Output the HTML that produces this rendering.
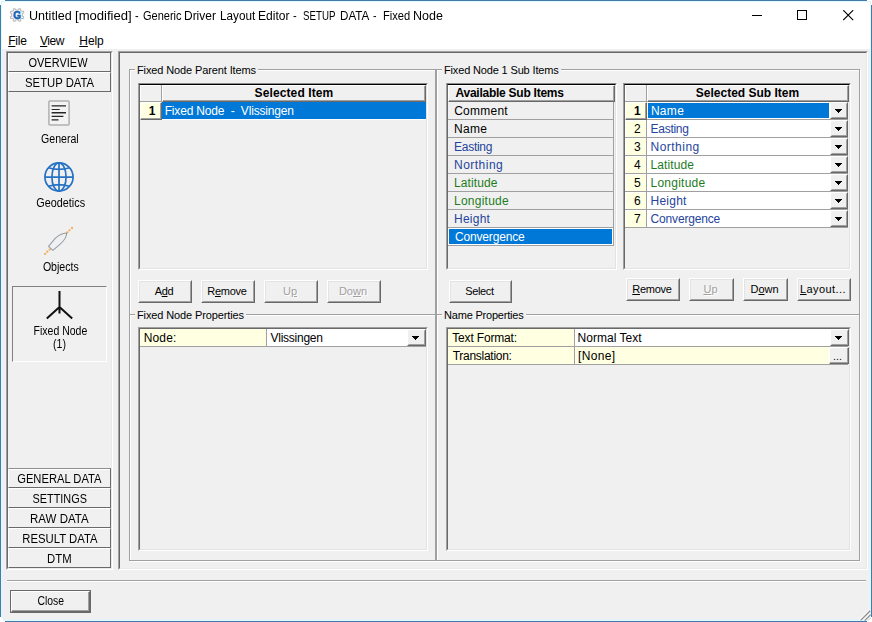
<!DOCTYPE html>
<html>
<head>
<meta charset="utf-8">
<title>Generic Driver Layout Editor</title>
<style>
html,body{margin:0;padding:0;}
body{width:872px;height:622px;position:relative;overflow:hidden;background:#fff;
 font-family:"Liberation Sans",sans-serif;font-size:12px;color:#000;}
.a{position:absolute;box-sizing:border-box;}
.t{position:absolute;white-space:nowrap;line-height:16px;height:16px;}
u{text-decoration:underline;text-underline-offset:1px;}
/* window chrome */
#titlebar{left:2px;top:2px;width:868px;height:47px;background:#fff;}
.bl{background:#447aa8;}
/* sunken panels */
.p2{border:1px solid;border-color:#a0a0a0 #fff #fff #a0a0a0;}
.p2:before{content:"";position:absolute;left:0;top:0;right:0;bottom:0;border:1px solid;border-color:#696969 #e9e9e9 #e9e9e9 #696969;}
.sunk1{border:1px solid;border-color:#696969 #fff #fff #696969;}
.lbtn{left:8px;width:103px;height:20px;border:1px solid;border-color:#fff #696969 #696969 #fff;
 text-align:center;font-size:12.3px;line-height:20px;}
.ms{display:inline-block;font-size:12.3px;transform-origin:50% 50%;white-space:nowrap;}
.btn{height:23px;border:1px solid;border-color:#fff #696969 #696969 #fff;text-align:center;
 font-size:11px;line-height:21px;padding-right:2px;}
.btn:before{content:"";position:absolute;left:0;top:0;right:0;bottom:0;border:1px solid;border-color:#e3e3e3 #a0a0a0 #a0a0a0 #e3e3e3;}
.btn.dis{color:#a0a0a0;text-shadow:1px 1px 0 #fff;}
.gb{border:1px solid #a0a0a0;box-shadow:1px 1px 0 #fff, inset 1px 1px 0 #fff;}
.gl{background:#f0f0f0;font-size:11px;padding:0 2px;line-height:14px;height:14px;}
.grid{border:2px solid;border-color:#8c8c8c #fff #fff #a0a0a0;}
.grid:before{content:"";position:absolute;left:-1px;top:-1px;right:-1px;bottom:-1px;border:1px solid;border-color:#000 #e3e3e3 #e3e3e3 #696969;}
.grid.pg{border-top-color:#a0a0a0;}
.grid.pg:before{border-top-color:#696969;}
.hl{background:#a0a0a0;}
.sel{background:#0078d7;color:#fff;}
.yl{background:#ffffe1;}
.wh{background:#fff;}
.hc{border:1px solid;border-color:#fff #696969 #696969 #fff;box-shadow:inset -1px -1px 0 #a0a0a0;}
.rc{border:1px solid;border-color:#fff #696969 #696969 #fff;box-shadow:inset -1px -1px 0 #a0a0a0;}
.blue{color:#26449c;}
.green{color:#1e7c1e;}
.b{font-weight:bold;}
.sx{transform-origin:0 50%;}
.dd{width:19px;height:17px;background:#f0f0f0;border:1px solid;border-color:#fff #696969 #696969 #fff;}
.dd:before{content:"";position:absolute;left:0;top:0;right:0;bottom:0;border:1px solid;border-color:#f0f0f0 #a0a0a0 #a0a0a0 #f0f0f0;}
.dd:after{content:"";position:absolute;left:4px;top:6px;width:7px;height:4px;background:linear-gradient(#000,#000) 0 0/7px 1px no-repeat,linear-gradient(#000,#000) 1px 1px/5px 1px no-repeat,linear-gradient(#000,#000) 2px 2px/3px 1px no-repeat,linear-gradient(#000,#000) 3px 3px/1px 1px no-repeat;}
</style>
</head>
<body>
<!-- window frame -->
<div class="a" style="left:0;top:0;width:872px;height:622px;background:#fff;"></div>
<div class="a bl" style="left:5px;top:0;width:862px;height:1px;"></div>
<div class="a bl" style="left:5px;top:621px;width:862px;height:1px;"></div>
<div class="a bl" style="left:0;top:5px;width:1px;height:612px;"></div>
<div class="a bl" style="left:871px;top:5px;width:1px;height:612px;"></div>
<div class="a" style="left:1px;top:1px;width:870px;height:620px;background:#f0f0f0;border:1px solid #dcfbff;box-shadow:inset 0 0 0 1px #e9f2fa;"></div>
<!-- title + menu background -->
<div class="a" id="titlebar"></div>
<!-- title icon -->
<svg class="a" style="left:9px;top:7px;" width="17" height="16" viewBox="0 0 17 16">
 <path d="M4 1.2H6.2V2.5H9.8V1.2H12V3.8H15.2V6H13.9V9.6H15.2V11.8H12V14.7H9.8V13.4H6.2V14.7H4V11.8H0.9V9.6H2.2V6H0.9V3.8H4Z" fill="#eef6fe" stroke="#a8a8a8" stroke-width="0.85" stroke-linejoin="round" transform="translate(8.1 8) scale(.92) translate(-8.1 -8)"/>
 <text x="8.1" y="11.8" font-family="Liberation Sans, sans-serif" font-weight="bold" font-size="10" fill="#1261b2" stroke="#1261b2" stroke-width="0.5" text-anchor="middle">G</text>
</svg>
<div class="a" style="left:0;top:8px;width:460px;height:16px;font-size:12px;"><span class="t sx" style="left:29.4px;top:0;transform:scaleX(1.049);">Untitled</span> <span class="t sx" style="left:74.7px;top:0;transform:scaleX(1.09);">[modified]</span> <span class="t sx" style="left:135.2px;top:0;transform:scaleX(0.9);">-</span> <span class="t sx" style="left:142.8px;top:0;transform:scaleX(0.917);">Generic</span> <span class="t sx" style="left:184.4px;top:0;transform:scaleX(0.997);">Driver</span> <span class="t sx" style="left:219.7px;top:0;transform:scaleX(0.977);">Layout</span> <span class="t sx" style="left:257.8px;top:0;transform:scaleX(1.007);">Editor</span> <span class="t sx" style="left:292.5px;top:0;transform:scaleX(0.925);">-</span> <span class="t sx" style="left:302.7px;top:0;transform:scaleX(0.81);">SETUP</span> <span class="t sx" style="left:339.7px;top:0;transform:scaleX(0.969);">DATA</span> <span class="t sx" style="left:372.5px;top:0;transform:scaleX(0.875);">-</span> <span class="t sx" style="left:382.8px;top:0;transform:scaleX(0.929);">Fixed</span> <span class="t sx" style="left:412.7px;top:0;transform:scaleX(1.041);">Node</span> </div>
<!-- window controls -->
<div class="a" style="left:752px;top:15px;width:10px;height:1px;background:#000;"></div>
<div class="a" style="left:797px;top:10px;width:10px;height:10px;border:1px solid #000;"></div>
<svg class="a" style="left:843px;top:10px;" width="11" height="11" viewBox="0 0 11 11"><path d="M0.2 0.2L10.2 10.2M10.2 0.2L0.2 10.2" stroke="#000" stroke-width="1.15" fill="none"/></svg>

<!-- menu -->
<div class="t" style="left:8.2px;top:33px;font-size:12px;letter-spacing:-0.2px;"><u>F</u>ile</div>
<div class="t" style="left:40px;top:33px;font-size:12px;letter-spacing:-0.5px;"><u>V</u>iew</div>
<div class="t" style="left:79.3px;top:33px;font-size:12px;letter-spacing:-0.1px;"><u>H</u>elp</div>

<!-- left panel -->
<div class="a lbtn" style="top:52px;"><span class="ms" style="transform:scaleX(.895);margin-left:-2px">OVERVIEW</span></div>
<div class="a lbtn" style="top:72px;"><span class="ms" style="transform:scaleX(.918)">SETUP DATA</span></div>
<div class="a lbtn" style="top:468px;border-top-color:#8e8e8e;box-shadow:inset 0 1px 0 #fff;"><span class="ms" style="transform:scaleX(.91)">GENERAL DATA</span></div>
<div class="a lbtn" style="top:488px;"><span class="ms" style="transform:scaleX(.885)">SETTINGS</span></div>
<div class="a lbtn" style="top:508px;"><span class="ms" style="transform:scaleX(.935)">RAW DATA</span></div>
<div class="a lbtn" style="top:528px;"><span class="ms" style="transform:scaleX(.92)">RESULT DATA</span></div>
<div class="a lbtn" style="top:548px;"><span class="ms" style="transform:scaleX(.92)">DTM</span></div>
<div class="a p2" style="left:6px;top:51px;width:107px;height:519px;"></div>

<!-- left panel icons -->
<svg class="a" style="left:48px;top:100px;" width="22" height="26" viewBox="0 0 22 26">
 <rect x="0.9" y="0.9" width="20.2" height="24.2" rx="1" fill="#f3f3f3" stroke="#b0b0b0" stroke-width="1.5"/>
 <g stroke="#262626" stroke-width="1.4" fill="none">
  <path d="M3.6 5.9H18M3.6 12.8H18"/>
  <path d="M3.6 9.5H11.7M3.6 16.3H15.4M3.6 19.8H10.5" stroke-width="1.15"/>
 </g>
</svg>
<div class="t" style="left:10px;top:131px;width:100px;text-align:center;"><span class="ms" style="transform:scaleX(.86)">General</span></div>

<svg class="a" style="left:43px;top:161px;" width="32" height="32" viewBox="0 0 32 32">
 <g fill="none" stroke="#2672c4" stroke-width="1.7">
  <circle cx="16" cy="16" r="14.1"/>
  <ellipse cx="16" cy="16" rx="7.1" ry="14.1"/>
  <path d="M16 2V30M2 16.2H30M5.4 6.7Q16 9.9 26.6 6.7M5.4 25.3Q16 22.1 26.6 25.3"/>
 </g>
</svg>
<div class="t" style="left:10px;top:195px;width:101px;text-align:center;"><span class="ms" style="transform:scaleX(.88)">Geodetics</span></div>

<svg class="a" style="left:42px;top:224px;" width="34" height="34" viewBox="0 0 34 34">
 <g fill="#f3ae5e">
  <circle cx="3.1" cy="29.9" r="1.15"/><circle cx="5.3" cy="27.7" r="1.15"/><circle cx="7.6" cy="25.6" r="1.15"/>
  <circle cx="25.3" cy="8.5" r="1.15"/><circle cx="27.5" cy="6.3" r="1.15"/><circle cx="30" cy="4" r="1.15"/>
 </g>
 <path d="M24.6 8.9Q18.6 9.2 13.2 14.4L6.5 22.3L10.9 26.3L18.7 19.6Q25 13.8 24.6 8.9Z" fill="none" stroke="#939ca6" stroke-width="1.05" stroke-linejoin="round"/>
</svg>
<div class="t" style="left:10px;top:259px;width:101px;text-align:center;"><span class="ms" style="transform:scaleX(.862)">Objects</span></div>

<div class="a" style="left:12px;top:286px;width:95px;height:76px;border:1px solid;border-color:#808080 #fff #fff #808080;"></div>
<svg class="a" style="left:44px;top:289px;" width="32" height="32" viewBox="0 0 32 32">
 <path d="M15.5 2V24.5M15.5 18L2.8 29.5M15.5 18L28.2 29.5" stroke="#111" stroke-width="2" fill="none"/>
</svg>
<div class="t" style="left:10px;top:323px;width:101px;text-align:center;"><span class="ms" style="transform:scaleX(.854)">Fixed Node</span></div>
<div class="t" style="left:10px;top:336px;width:100px;text-align:center;"><span class="ms" style="transform:scaleX(.86)">(1)</span></div>

<!-- right panel -->
<div class="a p2" style="left:118px;top:51px;width:750px;height:519px;"></div>

<!-- bottom separator + close -->
<div class="a" style="left:7px;top:580px;width:859px;height:2px;background:#fff;border-top:1px solid #a0a0a0;"></div>
<div class="a" style="left:10px;top:590px;width:81px;height:23px;border:1px solid #696969;"></div>
<div class="a" style="left:11px;top:591px;width:79px;height:21px;border:1px solid;border-color:#fff #696969 #696969 #fff;text-align:center;line-height:18px;box-shadow:inset -1px -1px 0 #a0a0a0;"><span class="ms" style="transform:scaleX(.845)">Close</span></div>
<!-- resize grip -->
<svg class="a" style="left:858px;top:608px;" width="14" height="14" viewBox="0 0 14 14">
 <path d="M9 14L14 9V14Z" fill="#fff"/>
 <path d="M1.6 12.2L12 1.8M5.6 12.5L12.5 5.6" stroke="#fff" stroke-width="1.3" fill="none"/>
 <path d="M2.6 12.4L12.2 2.8M6.6 12.6L12.6 6.6" stroke="#8a8a8a" stroke-width="1.3" fill="none"/>
 <path d="M10.4 12.3L12.6 10.1" stroke="#909090" stroke-width="0.9" stroke-dasharray="0.9 0.9" fill="none"/>
</svg>
<div class="a" style="left:0;top:618px;width:3px;height:4px;background:#fff;"></div>

<!-- GROUP BOXES -->
<div class="a gb" style="left:129px;top:69px;width:307px;height:246px;"></div>
<div class="a gb" style="left:129px;top:314px;width:307px;height:247px;"></div>
<div class="a gb" style="left:436px;top:69px;width:424px;height:246px;"></div>
<div class="a gb" style="left:436px;top:314px;width:424px;height:247px;"></div>
<div class="t gl" style="left:135px;top:63px;letter-spacing:-0.118px;">Fixed Node Parent Items</div>
<div class="t gl" style="left:135px;top:308px;letter-spacing:-0.12px;">Fixed Node Properties</div>
<div class="t gl" style="left:442px;top:63px;letter-spacing:-0.155px;">Fixed Node 1 Sub Items</div>
<div class="t gl" style="left:442px;top:308px;letter-spacing:-0.196px;">Name Properties</div>

<!-- GRID 1: parent items -->
<div class="a grid" style="left:138px;top:83px;width:290px;height:187px;"></div>
<div class="a hl" style="left:140px;top:101px;width:286px;height:1px;"></div>
<div class="a hl" style="left:161px;top:85px;width:1px;height:35px;"></div>
<div class="a hc" style="left:162px;top:85px;width:264px;height:17px;"></div>
<div class="a" style="left:140px;top:85px;width:21px;height:16px;border:1px solid;border-color:#fff transparent transparent #fff;"></div>
<div class="t b" style="left:162px;top:85px;width:264px;text-align:center;letter-spacing:0.108px;">Selected Item</div>
<div class="a yl rc" style="left:140px;top:102px;width:22px;height:18px;"></div>
<div class="t b" style="left:140px;top:103px;width:15.4px;text-align:right;">1</div>
<div class="a sel" style="left:162px;top:102px;width:264px;height:18px;border-bottom:1px solid #fff;"></div>
<div class="t" style="left:164.7px;top:103px;color:#fff;letter-spacing:-0.171px;">Fixed Node&nbsp; -&nbsp; Vlissingen</div>

<!-- buttons row left -->
<div class="a btn" style="left:138px;top:280px;width:54px;letter-spacing:-0.35px;">A<u>d</u>d</div>
<div class="a btn" style="left:201px;top:280px;width:54px;letter-spacing:-0.25px;">R<u>e</u>move</div>
<div class="a btn dis" style="left:264px;top:280px;width:54px;">U<u>p</u></div>
<div class="a btn dis" style="left:327px;top:280px;width:54px;">Do<u>w</u>n</div>

<!-- PROP GRID 1 -->
<div class="a grid pg" style="left:138px;top:327px;width:290px;height:224px;"></div>
<div class="a yl" style="left:140px;top:329px;width:126px;height:17px;"></div>
<div class="a wh" style="left:267px;top:329px;width:159px;height:17px;"></div>
<div class="a hl" style="left:140px;top:346px;width:286px;height:1px;"></div>
<div class="a hl" style="left:266px;top:329px;width:1px;height:17px;"></div>
<div class="t" style="left:143.8px;top:330px;letter-spacing:0.112px;">Node:</div>
<div class="t" style="left:270.5px;top:330px;letter-spacing:-0.25px;">Vlissingen</div>
<div class="a dd" style="left:407px;top:329px;"></div>

<!-- GRID 2: available sub items -->
<div class="a grid" style="left:446px;top:83px;width:171px;height:187px;"></div>
<div class="a hc" style="left:448px;top:85px;width:167px;height:17px;"></div>
<div class="t b" style="left:455.5px;top:85px;letter-spacing:-0.25px;">Available Sub Items</div>
<div class="a hl" style="left:448px;top:119px;width:166px;height:1px;"></div>
<div class="a hl" style="left:448px;top:137px;width:166px;height:1px;"></div>
<div class="a hl" style="left:448px;top:155px;width:166px;height:1px;"></div>
<div class="a hl" style="left:448px;top:173px;width:166px;height:1px;"></div>
<div class="a hl" style="left:448px;top:191px;width:166px;height:1px;"></div>
<div class="a hl" style="left:448px;top:209px;width:166px;height:1px;"></div>
<div class="a hl" style="left:448px;top:227px;width:166px;height:1px;"></div>
<div class="a hl" style="left:448px;top:245px;width:166px;height:1px;"></div>
<div class="a hl" style="left:613px;top:102px;width:1px;height:144px;"></div>
<div class="a sel" style="left:448px;top:228px;width:165px;height:17px;border:1px solid #fff;"></div>
<div class="t" style="left:454.2px;top:103px;letter-spacing:0.25px;">Comment</div>
<div class="t" style="left:454px;top:121px;letter-spacing:0.3px;">Name</div>
<div class="t blue" style="left:454px;top:139px;letter-spacing:-0.267px;">Easting</div>
<div class="t blue" style="left:454px;top:157px;letter-spacing:0.486px;">Northing</div>
<div class="t green" style="left:454px;top:175px;letter-spacing:0.1px;">Latitude</div>
<div class="t green" style="left:454px;top:193px;letter-spacing:0.25px;">Longitude</div>
<div class="t blue" style="left:454px;top:211px;letter-spacing:0.24px;">Height</div>
<div class="t" style="left:455px;top:229px;color:#fff;letter-spacing:-0.17px;">Convergence</div>

<div class="a btn" style="left:449px;top:280px;width:63px;letter-spacing:-0.35px;">Select</div>

<!-- GRID 3: selected sub items -->
<div class="a grid" style="left:623px;top:83px;width:228px;height:187px;"></div>
<div class="a wh" style="left:647px;top:102px;width:183px;height:125px;"></div>
<div class="a yl" style="left:625px;top:102px;width:21px;height:125px;"></div>
<div class="a" style="left:625px;top:120px;width:21px;height:17px;border-top:1px solid #fff;border-left:1px solid #fff;"></div>
<div class="a" style="left:625px;top:138px;width:21px;height:17px;border-top:1px solid #fff;border-left:1px solid #fff;"></div>
<div class="a" style="left:625px;top:156px;width:21px;height:17px;border-top:1px solid #fff;border-left:1px solid #fff;"></div>
<div class="a" style="left:625px;top:174px;width:21px;height:17px;border-top:1px solid #fff;border-left:1px solid #fff;"></div>
<div class="a" style="left:625px;top:192px;width:21px;height:17px;border-top:1px solid #fff;border-left:1px solid #fff;"></div>
<div class="a" style="left:625px;top:210px;width:21px;height:17px;border-top:1px solid #fff;border-left:1px solid #fff;"></div>
<div class="a hl" style="left:646px;top:85px;width:1px;height:143px;"></div>
<div class="a hc" style="left:647px;top:85px;width:202px;height:17px;"></div>
<div class="a" style="left:625px;top:85px;width:21px;height:16px;border:1px solid;border-color:#fff transparent transparent #fff;"></div>
<div class="t b" style="left:647px;top:85px;width:201px;text-align:center;letter-spacing:0px;">Selected Sub Item</div>
<div class="a hl" style="left:625px;top:101px;width:22px;height:1px;"></div>
<div class="a hl" style="left:625px;top:119px;width:223px;height:1px;"></div>
<div class="a hl" style="left:625px;top:137px;width:223px;height:1px;"></div>
<div class="a hl" style="left:625px;top:155px;width:223px;height:1px;"></div>
<div class="a hl" style="left:625px;top:173px;width:223px;height:1px;"></div>
<div class="a hl" style="left:625px;top:191px;width:223px;height:1px;"></div>
<div class="a hl" style="left:625px;top:209px;width:223px;height:1px;"></div>
<div class="a hl" style="left:625px;top:227px;width:223px;height:1px;"></div>
<div class="a sel" style="left:648px;top:103px;width:181px;height:15px;"></div>
<div class="a yl rc" style="left:625px;top:102px;width:22px;height:18px;"></div>
<div class="t b" style="left:625px;top:103px;width:15.6px;text-align:right;">1</div>
<div class="t" style="left:625px;top:121px;width:15.6px;text-align:right;">2</div>
<div class="t" style="left:625px;top:139px;width:15.6px;text-align:right;">3</div>
<div class="t" style="left:625px;top:157px;width:15.6px;text-align:right;">4</div>
<div class="t" style="left:625px;top:175px;width:15.6px;text-align:right;">5</div>
<div class="t" style="left:625px;top:193px;width:15.6px;text-align:right;">6</div>
<div class="t" style="left:625px;top:211px;width:15.6px;text-align:right;">7</div>
<div class="t" style="left:650.9px;top:103px;color:#fff;letter-spacing:0.3px;">Name</div>
<div class="t blue" style="left:650.5px;top:121px;letter-spacing:-0.267px;">Easting</div>
<div class="t blue" style="left:650.5px;top:139px;letter-spacing:0.486px;">Northing</div>
<div class="t green" style="left:650.5px;top:157px;letter-spacing:0.1px;">Latitude</div>
<div class="t green" style="left:650.5px;top:175px;letter-spacing:0.25px;">Longitude</div>
<div class="t blue" style="left:650.5px;top:193px;letter-spacing:0.24px;">Height</div>
<div class="t blue" style="left:650.6px;top:211px;letter-spacing:-0.17px;">Convergence</div>
<div class="a dd" style="left:830px;top:102px;width:18px;"></div>
<div class="a dd" style="left:830px;top:120px;width:18px;"></div>
<div class="a dd" style="left:830px;top:138px;width:18px;"></div>
<div class="a dd" style="left:830px;top:156px;width:18px;"></div>
<div class="a dd" style="left:830px;top:174px;width:18px;"></div>
<div class="a dd" style="left:830px;top:192px;width:18px;"></div>
<div class="a dd" style="left:830px;top:210px;width:18px;"></div>

<!-- buttons row right -->
<div class="a btn" style="left:626px;top:278px;width:54px;letter-spacing:-0.25px;"><u>R</u>emove</div>
<div class="a btn dis" style="left:689px;top:278px;width:45px;"><u>U</u>p</div>
<div class="a btn" style="left:743px;top:278px;width:45px;">D<u>o</u>wn</div>
<div class="a btn" style="left:797px;top:278px;width:54px;letter-spacing:0.41px;"><u>L</u>ayout...</div>

<!-- PROP GRID 2 -->
<div class="a grid pg" style="left:446px;top:327px;width:405px;height:224px;"></div>
<div class="a yl" style="left:448px;top:329px;width:126px;height:35px;"></div>
<div class="a wh" style="left:575px;top:329px;width:273px;height:17px;"></div>
<div class="a yl" style="left:575px;top:347px;width:273px;height:17px;"></div>
<div class="a hl" style="left:448px;top:346px;width:400px;height:1px;"></div>
<div class="a hl" style="left:448px;top:364px;width:400px;height:1px;"></div>
<div class="a hl" style="left:574px;top:329px;width:1px;height:35px;"></div>
<div class="t" style="left:452.2px;top:330px;letter-spacing:-0.159px;">Text Format:</div>
<div class="t" style="left:452.7px;top:348px;letter-spacing:-0.273px;">Translation:</div>
<div class="t" style="left:577.5px;top:330px;letter-spacing:0.025px;">Normal Text</div>
<div class="t" style="left:578px;top:348px;letter-spacing:0.35px;">[None]</div>
<div class="a dd" style="left:830px;top:329px;"></div>
<div class="a" style="left:829px;top:347px;width:20px;height:17px;background:#f0f0f0;border:1px solid;border-color:#fff #696969 #696969 #fff;box-shadow:inset -1px -1px 0 #a0a0a0;font-size:11px;line-height:17px;text-align:center;padding-right:3px;color:#101030;">...</div>
</body>
</html>
